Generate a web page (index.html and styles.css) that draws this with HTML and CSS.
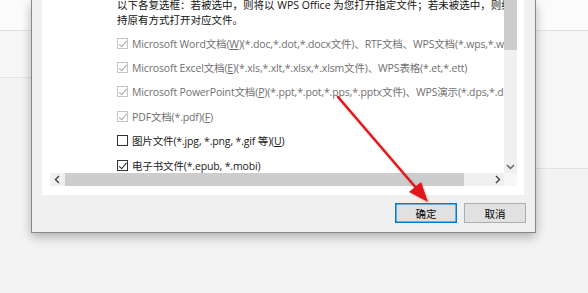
FILE: index.html
```html
<!DOCTYPE html>
<html lang="zh-CN">
<head>
<meta charset="utf-8">
<title>文件关联</title>
<link rel="stylesheet" href="styles.css">
</head>
<body>
<div class="desk">
  <div class="side side-left">
    <div class="band band-a"></div>
    <div class="band band-b"></div>
    <div class="band band-c"></div>
  </div>
  <div class="dialog">
    <div class="panel">
      <div class="listbox">
        <div class="view">
          <div class="content">
            <p class="intro">以下各复选框：若被选中，则将以 WPS Office 为您打开指定文件；若未被选中，则继续保<br>持原有方式打开对应文件。</p>
            <div class="opt disabled"><span class="cb checked"></span><span class="label">Microsoft Word文档(<u>W</u>)(*.doc,*.dot,*.docx文件)、RTF文档、WPS文档(*.wps,*.wpt)</span></div>
            <div class="opt disabled"><span class="cb checked"></span><span class="label">Microsoft Excel文档(<u>E</u>)(*.xls,*.xlt,*.xlsx,*.xlsm文件)、WPS表格(*.et,*.ett)</span></div>
            <div class="opt disabled"><span class="cb checked"></span><span class="label">Microsoft PowerPoint文档(<u>P</u>)(*.ppt,*.pot,*.pps,*.pptx文件)、WPS演示(*.dps,*.dpt)</span></div>
            <div class="opt disabled"><span class="cb checked"></span><span class="label">PDF文档(*.pdf)(<u>F</u>)</span></div>
            <div class="opt"><span class="cb"></span><span class="label">图片文件(*.jpg, *.png, *.gif 等)(<u>U</u>)</span></div>
            <div class="opt"><span class="cb checked"></span><span class="label">电子书文件(*.epub, *.mobi)</span></div>
          </div>
          <div class="vscroll">
            <div class="vthumb"></div>
            <div class="vtrack"></div>
            <div class="sbtn">
              <svg width="9" height="6" viewBox="0 0 9 6"><path d="M1 1 L4.5 4.5 L8 1" fill="none" stroke="#606060" stroke-width="1.4"/></svg>
            </div>
          </div>
        </div>
        <div class="hscroll">
          <div class="sbtn">
            <svg width="6" height="9" viewBox="0 0 6 9"><path d="M5 1 L1.5 4.5 L5 8" fill="none" stroke="#404040" stroke-width="1.4"/></svg>
          </div>
          <div class="htrack"><div class="hthumb"></div></div>
          <div class="sbtn">
            <svg width="6" height="9" viewBox="0 0 6 9"><path d="M1 1 L4.5 4.5 L1 8" fill="none" stroke="#404040" stroke-width="1.4"/></svg>
          </div>
          <div class="corner"></div>
        </div>
      </div>
    </div>
    <div class="buttons">
      <button class="btn primary">确定</button>
      <button class="btn">取消</button>
    </div>
  </div>
  <div class="side side-right">
    <div class="band band-d"></div>
    <div class="band band-e"></div>
    <div class="band band-f"></div>
  </div>
</div>
<svg class="pointer" width="588" height="293" viewBox="0 0 588 293">
  <defs>
    <filter id="sh" x="-20%" y="-20%" width="140%" height="140%">
      <feDropShadow dx="1" dy="1" stdDeviation="0.8" flood-color="#000" flood-opacity="0.25"/>
    </filter>
  </defs>
  <g filter="url(#sh)">
    <line x1="338" y1="97" x2="417" y2="189" stroke="#e0181c" stroke-width="2.4" stroke-linecap="round"/>
    <polygon points="428,202 409,192 421,182" fill="#e0181c"/>
  </g>
</svg>
</body>
</html>
```

FILE: styles.css
```css
* { box-sizing: border-box; }

html, body {
  margin: 0;
  padding: 0;
  width: 588px;
  height: 293px;
  overflow: hidden;
  background: #f3f3f3;
  font-family: "Open Sans", "Noto Sans CJK SC", sans-serif;
  font-size: 10.5px;
  color: #1a1a1a;
}

.desk {
  display: flex;
  height: 293px;
}

.side {
  display: flex;
  flex-direction: column;
}

.side-left { width: 31px; flex: none; }
.side-right { flex: 1; }

.band { border-bottom: 1px solid #e2e2e2; }
.band-a { height: 31px; background: #fbfbfb; }
.band-b { height: 47px; background: #f6f6f6; }
.band-c { flex: 1; border-bottom: none; background: #f3f3f3; }
.band-d { height: 31px; background: #fbfbfb; }
.band-e { height: 138px; background: #f6f6f6; }
.band-f { flex: 1; border-bottom: none; background: #f3f3f3; }

.dialog {
  flex: none;
  width: 505px;
  height: 233px;
  background: #f0f0f0;
  border: 1px solid #888;
  border-top: none;
  box-shadow: 0 4px 10px rgba(0, 0, 0, 0.28);
  display: flex;
  flex-direction: column;
  padding: 0 11px 0 10px;
  position: relative;
  z-index: 1;
}

.panel {
  height: 195px;
  background: #fff;
  padding: 0 7px 9px 8px;
}

.listbox {
  height: 186px;
  display: flex;
  flex-direction: column;
}

.view {
  display: flex;
  height: 173px;
}

.content {
  flex: 1;
  overflow: hidden;
  padding-left: 67px;
  white-space: nowrap;
}

.intro {
  margin: -2px 0 3px;
  line-height: 15px;
  color: #111;
}

.opt {
  display: flex;
  align-items: center;
  gap: 4px;
  height: 24.4px;
  letter-spacing: -0.15px;
}

.opt.disabled { color: #6f6f6f; }

.opt u { text-decoration: underline; text-underline-offset: 1px; }

.cb {
  flex: none;
  width: 11px;
  height: 11px;
  border: 1px solid #333;
  background: #fff;
  position: relative;
}

.cb.checked::after {
  content: "";
  position: absolute;
  left: 2.5px;
  top: 0px;
  width: 3px;
  height: 6.5px;
  border: solid #222;
  border-width: 0 1.3px 1.3px 0;
  transform: rotate(40deg);
}

.disabled .cb { border-color: #c4c4c4; }
.disabled .cb.checked::after { border-color: #a8a8a8; }

.vscroll {
  width: 13px;
  flex: none;
  display: flex;
  flex-direction: column;
  background: #f0f0f0;
}

.vthumb { height: 50px; background: #cdcdcd; }
.vtrack { flex: 1; }

.sbtn {
  width: 13px;
  height: 13px;
  flex: none;
  display: flex;
  align-items: center;
  justify-content: center;
  background: #f0f0f0;
}

.hscroll {
  height: 13px;
  display: flex;
  background: #f0f0f0;
}

.htrack {
  flex: 1;
  padding-left: 2px;
  display: flex;
}

.hthumb { width: 399px; background: #cdcdcd; }

.corner { width: 13px; flex: none; background: #f7f7f7; }

.buttons {
  display: flex;
  justify-content: flex-end;
  gap: 7px;
  margin-top: 8px;
}

.btn {
  width: 62px;
  height: 20px;
  padding: 0;
  font: inherit;
  color: #000;
  background: #e1e1e1;
  border: 1px solid #adadad;
  margin-right: -2px;
}

.btn.primary {
  border-color: #0078d7;
  box-shadow: inset 0 0 0 0.5px #0078d7;
  margin-right: 0;
}

.pointer {
  position: absolute;
  left: 0;
  top: 0;
  z-index: 5;
  pointer-events: none;
}
```
